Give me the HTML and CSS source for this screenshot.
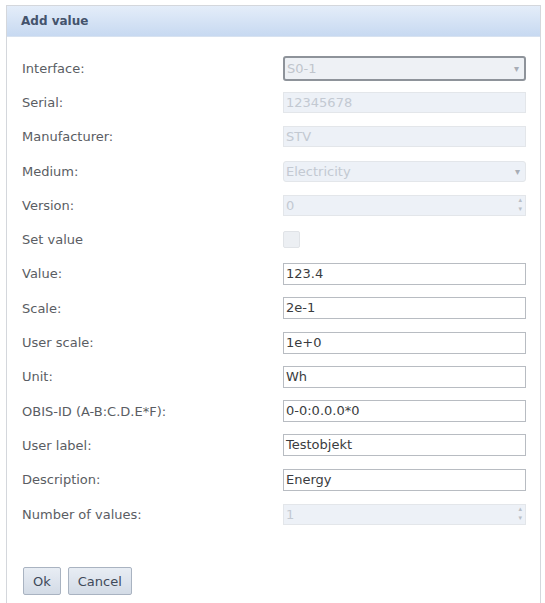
FILE: index.html
```html
<!DOCTYPE html>
<html lang="en">
<head>
    <meta charset="UTF-8">
    <title>Add value</title>
    <link rel="stylesheet" href="styles.css">
</head>
<body>

    <div class="dialog">
        <div class="dialog-title">Add value</div>

        <div class="dialog-body">
            <div class="form-grid">
                <label>Interface:</label>
                <div class="field select focus">S0-1<span class="caret">&#9662;</span></div>

                <label>Serial:</label>
                <div class="field disabled">12345678</div>

                <label>Manufacturer:</label>
                <div class="field disabled">STV</div>

                <label>Medium:</label>
                <div class="field select disabled">Electricity<span class="caret">&#9662;</span></div>

                <label>Version:</label>
                <div class="field disabled spin">0<span class="spinner"><i>&#9652;</i><i>&#9662;</i></span></div>

                <label>Set value</label>
                <div><span class="checkbox"></span></div>

                <label>Value:</label>
                <div class="field">123.4</div>

                <label>Scale:</label>
                <div class="field">2e-1</div>

                <label>User scale:</label>
                <div class="field">1e+0</div>

                <label>Unit:</label>
                <div class="field">Wh</div>

                <label>OBIS-ID (A-B:C.D.E*F):</label>
                <div class="field">0-0:0.0.0*0</div>

                <label>User label:</label>
                <div class="field">Testobjekt</div>

                <label>Description:</label>
                <div class="field">Energy</div>

                <label>Number of values:</label>
                <div class="field disabled spin">1<span class="spinner"><i>&#9652;</i><i>&#9662;</i></span></div>
            </div>

            <div class="dialog-actions">
                <button class="btn">Ok</button>
                <button class="btn">Cancel</button>
            </div>
        </div>
    </div>

</body>
</html>
```

FILE: styles.css
```css
* { box-sizing: border-box; }

body { margin: 0; background: #fff; font-family: "DejaVu Sans", Verdana, sans-serif; font-size: 13px; color: #4a4d52; }

/* DIALOG */
.dialog { margin: 5px 4px 0 6px; height: 598px; border: 1px solid #d4d7dc; border-bottom: none; background: #fff; }
.dialog-title { height: 31px; line-height: 31px; padding-left: 14px; font-weight: 700; font-size: 12px; color: #44536c; background: linear-gradient(#e4edf9, #c7d9f1); border-bottom: 1px solid #d7e2f0; }
.dialog-body { padding: 14px 0 0 15px; }

/* FORMULARIO */
.form-grid { display: grid; grid-template-columns: 261px 243px; grid-auto-rows: 34.3px; align-items: center; }
.form-grid label { color: #5a5d63; }

.field { position: relative; height: 22px; line-height: 20px; padding: 0 2px; border: 1px solid #b8bcc2; background: #fff; color: #3a3c40; }
.field.disabled { border-color: #e3e6ea; background: #edf1f7; color: #c3c9d2; height: 21px; }
.field.select { border-radius: 3px; }
.field.focus { height: 25px; line-height: 22px; border: 2px solid #8e939a; background: #eef1f5; color: #c0c5cc; }
.caret { position: absolute; right: 5px; top: 0; font-size: 10px; color: #a8adb5; }
.spinner { position: absolute; right: 3px; top: 0; display: flex; flex-direction: column; font-size: 7px; line-height: 9px; color: #b9bec6; }
.spinner i { font-style: normal; }

.checkbox { display: block; width: 17px; height: 17px; border: 1px solid #e0e3e7; background: #eceff3; border-radius: 2px; }

/* BOTOES */
.dialog-actions { display: flex; gap: 7px; margin-top: 36px; padding-left: 1px; }
.btn { height: 28px; padding: 0 9px; font-family: inherit; font-size: 13px; color: #3f4a5a; background: linear-gradient(#e8edf4, #d3dbe6); border: 1px solid #a9b3c1; border-radius: 2px; }
```
